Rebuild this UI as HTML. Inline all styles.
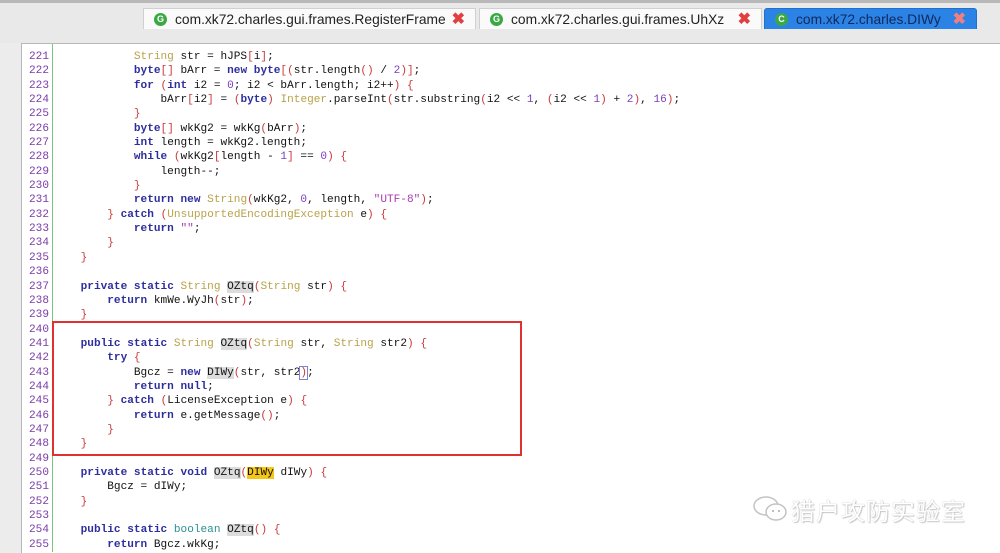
<!DOCTYPE html>
<html><head><meta charset="utf-8"><style>
body{margin:0;width:1000px;height:552px;overflow:hidden;background:#ececec;font-family:"Liberation Sans",sans-serif;position:relative}
.top{position:absolute;left:0;top:0;width:1000px;height:3px;background:#b8b8b8}
.bar{position:absolute;left:0;top:3px;width:1000px;height:40px;background:#e9e9e9}
.tab{position:absolute;top:8px;height:21px;background:#fafafa;border:1px solid #d0d0d0;border-bottom:none;font-size:13.8px;color:#222;line-height:21px;box-sizing:border-box;padding-left:31px;white-space:nowrap}
.tab .ic{position:absolute;left:10px;top:4px;width:13px;height:13px;border-radius:50%;background:#3aa845;color:#fff;font-size:9px;line-height:13px;text-align:center;font-weight:bold}
.tab .x{position:absolute;right:10px;top:0;color:#e04040;font-size:16px;font-weight:bold}
.panel{position:absolute;left:21px;top:43px;width:979px;height:509px;background:#fff;border-left:1px solid #b8b8b8;border-top:1px solid #b8b8b8}
.gut{position:absolute;left:52px;top:44px;width:1px;height:508px;background:#7cc47c}
pre{margin:0;font-family:"Liberation Mono",monospace;font-size:11.1px;line-height:14.35px;position:absolute;top:50px}
.ln{left:22px;width:27px;text-align:right;color:#7a3aa8}
.code{left:54px;color:#111}
.k{color:#2e2e9e;font-weight:bold}
.t{color:#b9a24a}
.p{color:#c83a3a}
.n{color:#7a3fbf}
.s{color:#a83ab0}
.b{color:#2a9090}
.h{background:#dcdcdc}
.y{background:#f5c518}
.box{position:absolute;left:52px;top:321px;width:470px;height:135px;border:2px solid #e03030;box-sizing:border-box}
.wm{position:absolute;left:791px;top:492px;font-family:"Noto Sans CJK SC",sans-serif;font-size:24px;color:#fff;text-shadow:0 0 1px #aaa,1px 1px 1px #ccc;letter-spacing:1px}
</style></head><body>
<div class="top"></div><div class="bar"></div>
<div class="tab" style="left:143px;width:333px"><span class="ic">G</span>com.xk72.charles.gui.frames.RegisterFrame<span class="x">✖</span></div>
<div class="tab" style="left:479px;width:283px"><span class="ic">G</span>com.xk72.charles.gui.frames.UhXz<span class="x">✖</span></div>
<div class="tab" style="left:764px;width:213px;background:#2b83e6;border-color:#2070d0;color:#12285a;border-radius:3px 3px 0 0"><span class="ic">C</span>com.xk72.charles.DIWy<span class="x" style="color:#f08080">✖</span></div>
<div class="panel"></div><div class="gut"></div>
<pre class="ln">221
222
223
224
225
226
227
228
229
230
231
232
233
234
235
236
237
238
239
240
241
242
243
244
245
246
247
248
249
250
251
252
253
254
255</pre>
<pre class="code">            <span class="t">String</span> str = hJPS<span class="p">[</span>i<span class="p">]</span>;
            <span class="k">byte</span><span class="p">[]</span> bArr = <span class="k">new</span> <span class="k">byte</span><span class="p">[(</span>str.length<span class="p">()</span> / <span class="n">2</span><span class="p">)]</span>;
            <span class="k">for</span> <span class="p">(</span><span class="k">int</span> i2 = <span class="n">0</span>; i2 &lt; bArr.length; i2++<span class="p">)</span> <span class="p">{</span>
                bArr<span class="p">[</span>i2<span class="p">]</span> = <span class="p">(</span><span class="k">byte</span><span class="p">)</span> <span class="t">Integer</span>.parseInt<span class="p">(</span>str.substring<span class="p">(</span>i2 &lt;&lt; <span class="n">1</span>, <span class="p">(</span>i2 &lt;&lt; <span class="n">1</span><span class="p">)</span> + <span class="n">2</span><span class="p">)</span>, <span class="n">16</span><span class="p">)</span>;
            <span class="p">}</span>
            <span class="k">byte</span><span class="p">[]</span> wkKg2 = wkKg<span class="p">(</span>bArr<span class="p">)</span>;
            <span class="k">int</span> length = wkKg2.length;
            <span class="k">while</span> <span class="p">(</span>wkKg2<span class="p">[</span>length - <span class="n">1</span><span class="p">]</span> == <span class="n">0</span><span class="p">)</span> <span class="p">{</span>
                length--;
            <span class="p">}</span>
            <span class="k">return</span> <span class="k">new</span> <span class="t">String</span><span class="p">(</span>wkKg2, <span class="n">0</span>, length, <span class="s">"UTF-8"</span><span class="p">)</span>;
        <span class="p">}</span> <span class="k">catch</span> <span class="p">(</span><span class="t">UnsupportedEncodingException</span> e<span class="p">)</span> <span class="p">{</span>
            <span class="k">return</span> <span class="s">""</span>;
        <span class="p">}</span>
    <span class="p">}</span>

    <span class="k">private</span> <span class="k">static</span> <span class="t">String</span> <span class="h">OZtq</span><span class="p">(</span><span class="t">String</span> str<span class="p">)</span> <span class="p">{</span>
        <span class="k">return</span> kmWe.WyJh<span class="p">(</span>str<span class="p">)</span>;
    <span class="p">}</span>

    <span class="k">public</span> <span class="k">static</span> <span class="t">String</span> <span class="h">OZtq</span><span class="p">(</span><span class="t">String</span> str, <span class="t">String</span> str2<span class="p">)</span> <span class="p">{</span>
        <span class="k">try</span> <span class="p">{</span>
            Bgcz = <span class="k">new</span> <span class="h">DIWy</span><span class="p">(</span>str, str2<span class="p" style="outline:1px solid #8080d0">)</span>;
            <span class="k">return</span> <span class="k">null</span>;
        <span class="p">}</span> <span class="k">catch</span> <span class="p">(</span>LicenseException e<span class="p">)</span> <span class="p">{</span>
            <span class="k">return</span> e.getMessage<span class="p">()</span>;
        <span class="p">}</span>
    <span class="p">}</span>

    <span class="k">private</span> <span class="k">static</span> <span class="k">void</span> <span class="h">OZtq</span><span class="p">(</span><span class="y">DIWy</span> dIWy<span class="p">)</span> <span class="p">{</span>
        Bgcz = dIWy;
    <span class="p">}</span>

    <span class="k">public</span> <span class="k">static</span> <span class="b">boolean</span> <span class="h">OZtq</span><span class="p">()</span> <span class="p">{</span>
        <span class="k">return</span> Bgcz.wkKg;</pre>
<div class="box"></div>
<svg style="position:absolute;left:752px;top:494px" width="40" height="30" viewBox="0 0 40 30"><ellipse cx="14" cy="12" rx="12" ry="9" fill="none" stroke="#c4c4c4" stroke-width="1.5"/><ellipse cx="24" cy="18" rx="10" ry="8" fill="#fff" stroke="#c4c4c4" stroke-width="1.5"/><circle cx="21" cy="17" r="1" fill="#aaa"/><circle cx="27" cy="17" r="1" fill="#aaa"/></svg>
<div class="wm">猎户攻防实验室</div>
</body></html>
